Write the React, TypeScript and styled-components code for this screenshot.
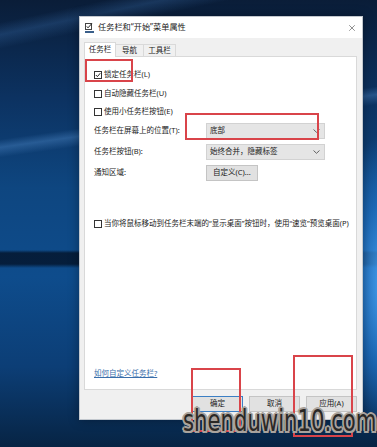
import React from "react";
import styled, { createGlobalStyle } from "styled-components";
import { X } from "lucide-react";

const GlobalStyle = createGlobalStyle`
  html, body { margin: 0; padding: 0; }
  body {
    width: 377px;
    height: 447px;
    overflow: hidden;
    font-family: "Noto Sans", "Noto Sans CJK SC", sans-serif;
  }
`;

const Desktop = styled.div`
  position: relative;
  width: 377px;
  height: 447px;
  overflow: hidden;
  box-sizing: border-box;
  padding: 16px 0 0 79px;
  background:
    radial-gradient(ellipse 45px 150px at 382px 285px, rgba(70, 160, 240, 0.95), rgba(40, 130, 220, 0.55) 55%, transparent 100%),
    linear-gradient(180deg, transparent 0, transparent 250px, rgba(4, 22, 46, 0.85) 253px, rgba(4, 22, 46, 0.85) 264px, transparent 268px),
    linear-gradient(172deg, transparent 0, transparent 138px, rgba(90, 150, 215, 0.35) 146px, transparent 156px),
    linear-gradient(168deg, transparent 0, transparent 22px, rgba(70, 130, 200, 0.25) 34px, transparent 48px),
    linear-gradient(180deg, #0a1d38 0%, #0c3261 22%, #0e4680 42%, #0e4c8c 62%, #0c3e76 82%, #072444 100%);
`;

const Dialog = styled.div`
  width: 284px;
  height: 404px;
  box-sizing: border-box;
  border: 1px solid #c3c8ce;
  background: #f0f0f0;
  display: flex;
  flex-direction: column;
  box-shadow: 0 0 10px rgba(0, 0, 0, 0.35);
`;

const TitleBar = styled.div`
  flex: none;
  height: 21px;
  background: #ffffff;
  display: flex;
  align-items: center;
  gap: 4px;
  padding: 0 4px 0 5px;
`;

const TitleText = styled.span`
  flex: 1;
  font-size: 8.2px;
  line-height: 1;
  color: #222;
`;

const CloseBox = styled.span`
  display: flex;
  align-items: center;
  justify-content: center;
  width: 12px;
  height: 12px;
  color: #333;
`;

const Body = styled.div`
  flex: 1;
  display: flex;
  flex-direction: column;
  min-height: 0;
  padding: 4px 5px 7px 4px;
`;

const Tabs = styled.div`
  flex: none;
  height: 14px;
  display: flex;
  align-items: flex-end;
`;

const Tab = styled.div<{ $active?: boolean; $w: number }>`
  position: relative;
  z-index: ${(p) => (p.$active ? 1 : 0)};
  box-sizing: border-box;
  width: ${(p) => p.$w}px;
  height: ${(p) => (p.$active ? 15 : 12)}px;
  margin-bottom: ${(p) => (p.$active ? -1 : 0)}px;
  margin-left: ${(p) => (p.$active ? 0 : -1)}px;
  border: 1px solid #d9d9d9;
  border-bottom: none;
  background: ${(p) => (p.$active ? "#ffffff" : "#f0f0f0")};
  display: flex;
  align-items: center;
  justify-content: center;
  padding-bottom: ${(p) => (p.$active ? 1 : 0)}px;
  font-size: 7.5px;
  line-height: 1;
  color: #1a1a1a;
`;

const Panel = styled.div`
  flex: 1;
  min-height: 0;
  background: #ffffff;
  border: 1px solid #d9d9d9;
  display: flex;
  flex-direction: column;
  padding: 12px 0 10px 9px;
`;

const CheckGroup = styled.div`
  display: flex;
  flex-direction: column;
  gap: 6.5px;
`;

const CheckRow = styled.label<{ $top?: number }>`
  display: flex;
  align-items: center;
  gap: 2px;
  height: 12px;
  margin-top: ${(p) => p.$top ?? 0}px;
  font-size: 7.5px;
  line-height: 1;
  color: #1a1a1a;
  white-space: nowrap;
`;

const Box = styled.span`
  box-sizing: border-box;
  width: 8px;
  height: 8px;
  flex: none;
  border: 1px solid #333;
  background: #fff;
  display: flex;
  align-items: center;
  justify-content: center;
`;

const FieldGrid = styled.div`
  margin-top: 5px;
  display: grid;
  grid-template-columns: 112px 119px;
  grid-auto-rows: 16px;
  row-gap: 5px;
  align-items: center;
`;

const FieldLabel = styled.span`
  font-size: 7.5px;
  line-height: 1;
  color: #1a1a1a;
  white-space: nowrap;
`;

const Select = styled.div`
  box-sizing: border-box;
  height: 16px;
  background: #e5e5e5;
  border: 1px solid #d2d2d2;
  display: flex;
  align-items: center;
  justify-content: space-between;
  padding: 0 4px 0 3px;
  font-size: 7.5px;
  line-height: 1;
  color: #1a1a1a;
`;

const PushButton = styled.div<{ $w: number; $primary?: boolean }>`
  box-sizing: border-box;
  width: ${(p) => p.$w}px;
  height: 16px;
  background: #e1e1e1;
  border: 1px solid ${(p) => (p.$primary ? "#3c7fc4" : "#c4c4c4")};
  display: flex;
  align-items: center;
  justify-content: center;
  font-size: 7.5px;
  line-height: 1;
  color: #1a1a1a;
`;

const HelpLink = styled.a`
  margin-top: auto;
  height: 10px;
  display: flex;
  align-items: center;
  font-size: 7.5px;
  line-height: 1;
  color: #3a6eaa;
  text-decoration: underline;
  cursor: pointer;
`;

const ButtonBar = styled.div`
  flex: none;
  margin-top: 6px;
  display: flex;
  justify-content: flex-end;
  gap: 6px;
`;

const RedBox = styled.div<{ $x: number; $y: number; $w: number; $h: number }>`
  position: absolute;
  left: ${(p) => p.$x}px;
  top: ${(p) => p.$y}px;
  width: ${(p) => p.$w}px;
  height: ${(p) => p.$h}px;
  box-sizing: border-box;
  border: 2px solid #d9444a;
  pointer-events: none;
`;

const Watermark = styled.div`
  position: absolute;
  left: 183px;
  top: 405px;
  font-family: "DejaVu Sans Condensed", "DejaVu Sans", sans-serif;
  font-size: 31px;
  line-height: 1;
  color: #2a2826;
  white-space: nowrap;
  transform: scaleX(0.76);
  transform-origin: left top;
  text-shadow:
    2.5px 0 0 #a9a39d, -2.5px 0 0 #a9a39d, 0 2px 0 #a9a39d, 0 -2px 0 #a9a39d,
    1.8px 1.5px 0 #a9a39d, -1.8px 1.5px 0 #a9a39d, 1.8px -1.5px 0 #a9a39d, -1.8px -1.5px 0 #a9a39d;
`;

const TitleIcon = () => (
  <svg width="9" height="10" viewBox="0 0 9 10">
    <rect x="0.5" y="0.5" width="6" height="6" fill="#fff" stroke="#444" />
    <polyline points="1.8,3.4 3,4.8 6.8,0.6" fill="none" stroke="#222" strokeWidth="1" />
    <rect x="0" y="8" width="9" height="2" fill="#3a5f8a" />
  </svg>
);

const Check = () => (
  <svg width="6" height="6" viewBox="0 0 6 6">
    <polyline points="0.8,3 2.4,4.6 5.3,1.2" fill="none" stroke="#222" strokeWidth="1" />
  </svg>
);

const Chevron = () => (
  <svg width="7" height="4" viewBox="0 0 7 4">
    <polyline points="0.5,0.5 3.5,3.3 6.5,0.5" fill="none" stroke="#555" strokeWidth="0.9" />
  </svg>
);

const CheckItem: React.FC<{ checked?: boolean; top?: number; children: React.ReactNode }> = ({
  checked,
  top,
  children,
}) => (
  <CheckRow $top={top}>
    <Box>{checked && <Check />}</Box>
    <span>{children}</span>
  </CheckRow>
);

export default function App() {
  return (
    <>
      <GlobalStyle />
      <Desktop>
        <Dialog>
          <TitleBar>
            <TitleIcon />
            <TitleText>任务栏和“开始”菜单属性</TitleText>
            <CloseBox>
              <X size={10} strokeWidth={1.3} />
            </CloseBox>
          </TitleBar>
          <Body>
            <Tabs>
              <Tab $active $w={32}>任务栏</Tab>
              <Tab $w={29}>导航</Tab>
              <Tab $w={33}>工具栏</Tab>
            </Tabs>
            <Panel>
              <CheckGroup>
                <CheckItem checked>锁定任务栏(L)</CheckItem>
                <CheckItem>自动隐藏任务栏(U)</CheckItem>
                <CheckItem>使用小任务栏按钮(E)</CheckItem>
              </CheckGroup>
              <FieldGrid>
                <FieldLabel>任务栏在屏幕上的位置(T):</FieldLabel>
                <Select>
                  <span>底部</span>
                  <Chevron />
                </Select>
                <FieldLabel>任务栏按钮(B):</FieldLabel>
                <Select>
                  <span>始终合并，隐藏标签</span>
                  <Chevron />
                </Select>
                <FieldLabel>通知区域:</FieldLabel>
                <PushButton $w={52}>自定义(C)...</PushButton>
              </FieldGrid>
              <CheckItem top={37}>
                当你将鼠标移动到任务栏末端的“显示桌面”按钮时，使用“速览”预览桌面(P)
              </CheckItem>
              <HelpLink>如何自定义任务栏?</HelpLink>
            </Panel>
            <ButtonBar>
              <PushButton $w={51} $primary>确定</PushButton>
              <PushButton $w={51}>取消</PushButton>
              <PushButton $w={51}>应用(A)</PushButton>
            </ButtonBar>
          </Body>
        </Dialog>
        <RedBox $x={85} $y={59} $w={48} $h={23} />
        <RedBox $x={185} $y={113} $w={134} $h={27} />
        <RedBox $x={191} $y={368} $w={50} $h={64} />
        <RedBox $x={293} $y={355} $w={60} $h={82} />
        <Watermark>shenduwin10.com</Watermark>
      </Desktop>
    </>
  );
}
